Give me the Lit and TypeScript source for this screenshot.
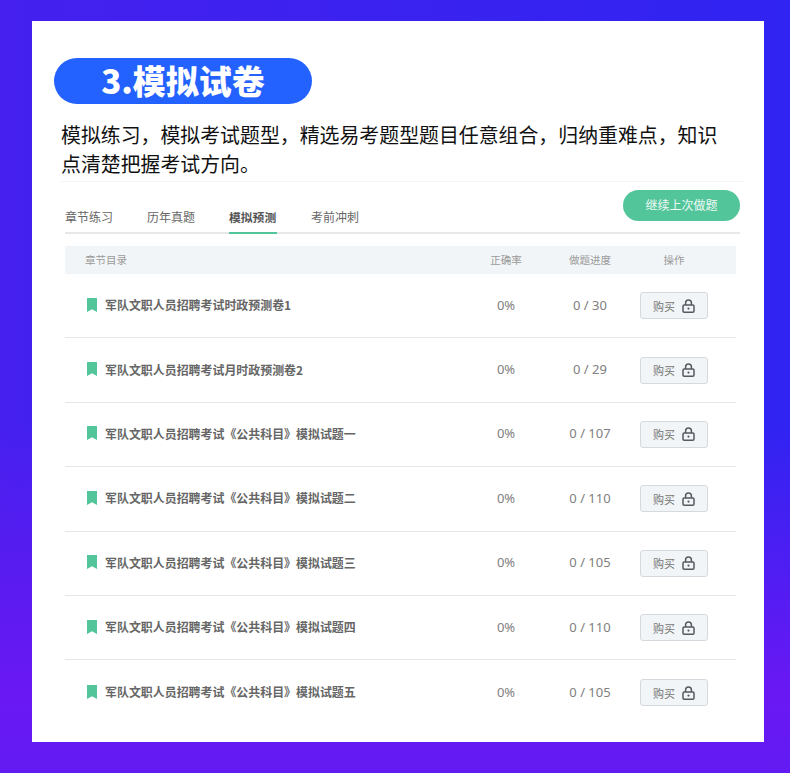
import { LitElement, html, css, svg } from "lit";
import { customElement } from "lit/decorators.js";

const rows = [
  ["军队文职人员招聘考试时政预测卷1", "0 / 30"],
  ["军队文职人员招聘考试月时政预测卷2", "0 / 29"],
  ["军队文职人员招聘考试《公共科目》模拟试题一", "0 / 107"],
  ["军队文职人员招聘考试《公共科目》模拟试题二", "0 / 110"],
  ["军队文职人员招聘考试《公共科目》模拟试题三", "0 / 105"],
  ["军队文职人员招聘考试《公共科目》模拟试题四", "0 / 110"],
  ["军队文职人员招聘考试《公共科目》模拟试题五", "0 / 105"],
];
const tabs = ["章节练习", "历年真题", "模拟预测", "考前冲刺"];

const bookmark = svg`<svg class="mark" width="10" height="14" viewBox="0 0 10 14"><path d="M0 0H10V14L5 11.2L0 14Z" fill="#52c59a"/></svg>`;
const lock = svg`<svg class="lock" width="13" height="14" viewBox="0 0 13 14" fill="none" stroke="#555a60" stroke-width="1.5"><path d="M3.6 6V3.8a2.9 2.9 0 0 1 5.8 0V6"/><rect x="1" y="6" width="11" height="7.2" rx="1.2"/><circle cx="6.5" cy="9.6" r="1.1" fill="#555a60" stroke="none"/></svg>`;

@customElement("app-root")
export class AppRoot extends LitElement {
  static styles = css`
    :host {
      display: block;
      width: 790px;
      height: 773px;
      box-sizing: border-box;
      padding: 21px 26px 31px 32px;
      background:
        linear-gradient(to bottom, rgba(106, 24, 243, 0) 55%, #6a18f3 90%, #621bf2 100%),
        linear-gradient(to right, #4520ee, #3024f2);
      font-family: "Noto Sans CJK SC", "Noto Sans", sans-serif;
      overflow: hidden;
    }
    .card {
      height: 721px;
      box-sizing: border-box;
      background: #fff;
      padding: 37px 0 0 22px;
    }
    .pill {
      width: 258px;
      height: 46px;
      border-radius: 23px;
      background: #2462ff;
      color: #fff;
      font-size: 33px;
      font-weight: 900;
      line-height: 45px;
      text-align: center;
    }
    .intro {
      margin: 16px 0 0 7px;
      width: 670px;
      font-size: 19.9px;
      line-height: 29px;
      color: #111;
    }
    .rule {
      margin: 3px 19px 0 7px;
      height: 1px;
      background: #f3f4f5;
    }
    .panel {
      margin: 8px 28px 0 11px;
    }
    .top {
      display: flex;
      justify-content: space-between;
      align-items: flex-start;
    }
    .tabs {
      display: flex;
      gap: 34px;
      flex: 1;
      height: 42px;
      align-items: flex-end;
      border-bottom: 2px solid #e6e8ea;
    }
    .tab {
      width: 48px;
      font-size: 12px;
      line-height: 17px;
      color: #666;
      padding-bottom: 7px;
      white-space: nowrap;
    }
    .tab.on {
      color: #555;
      font-weight: 700;
      font-size: 11.8px;
      box-shadow: 0 2px 0 #52c59a;
    }
    .resume {
      margin-right: -4px;
      margin-left: -117px;
      width: 117px;
      height: 31px;
      border-radius: 16px;
      background: #52c59a;
      color: #eefaf5;
      font-size: 12px;
      line-height: 30px;
      text-align: center;
    }
    .head, .row {
      display: grid;
      grid-template-columns: 1fr 84px 84px 84px;
      padding-right: 20px;
      align-items: center;
    }
    .head {
      margin-top: 12px;
      height: 28px;
      background: #f2f5f7;
      color: #9a9a9a;
      font-size: 10.5px;
      line-height: 26px;
      text-align: center;
    }
    .head span:first-child { text-align: left; padding-left: 20px; }
    .row {
      height: 64.4px;
      box-sizing: border-box;
      padding-bottom: 2px;
      border-bottom: 1px solid #e4e6e8;
      color: #808080;
      font-family: "Noto Sans", "Noto Sans CJK SC", sans-serif;
      font-size: 13px;
      text-align: center;
    }
    .row:last-child { border-bottom: 0; }
    .title {
      display: flex;
      align-items: center;
      gap: 8px;
      padding-left: 22px;
      font-family: "Noto Sans CJK SC", sans-serif;
      font-size: 11.95px;
      font-weight: 700;
      color: #666;
      text-align: left;
    }
    .mark { flex: none; }
    .buy {
      justify-self: center;
      margin-top: 2px;
      width: 68px;
      height: 27px;
      box-sizing: border-box;
      display: flex;
      align-items: center;
      justify-content: center;
      gap: 7px;
      border: 1px solid #d5d9dd;
      border-radius: 3px;
      background: #f2f5f7;
      color: #777;
      font-family: "Noto Sans CJK SC", sans-serif;
      font-size: 11px;
    }
  `;

  render() {
    return html`
      <div class="card">
        <div class="pill">3.模拟试卷</div>
        <p class="intro">模拟练习，模拟考试题型，精选易考题型题目任意组合，归纳重难点，知识点清楚把握考试方向。</p>
        <div class="rule"></div>
        <div class="panel">
          <div class="top">
            <div class="tabs">
              ${tabs.map((t, i) => html`<div class="tab ${i === 2 ? "on" : ""}">${t}</div>`)}
            </div>
            <div class="resume">继续上次做题</div>
          </div>
          <div class="head"><span>章节目录</span><span>正确率</span><span>做题进度</span><span>操作</span></div>
          ${rows.map(
            ([t, p]) => html`<div class="row">
              <div class="title">${bookmark}<span>${t}</span></div>
              <div>0%</div>
              <div>${p}</div>
              <div class="buy"><span>购买</span>${lock}</div>
            </div>`
          )}
        </div>
      </div>
    `;
  }
}
